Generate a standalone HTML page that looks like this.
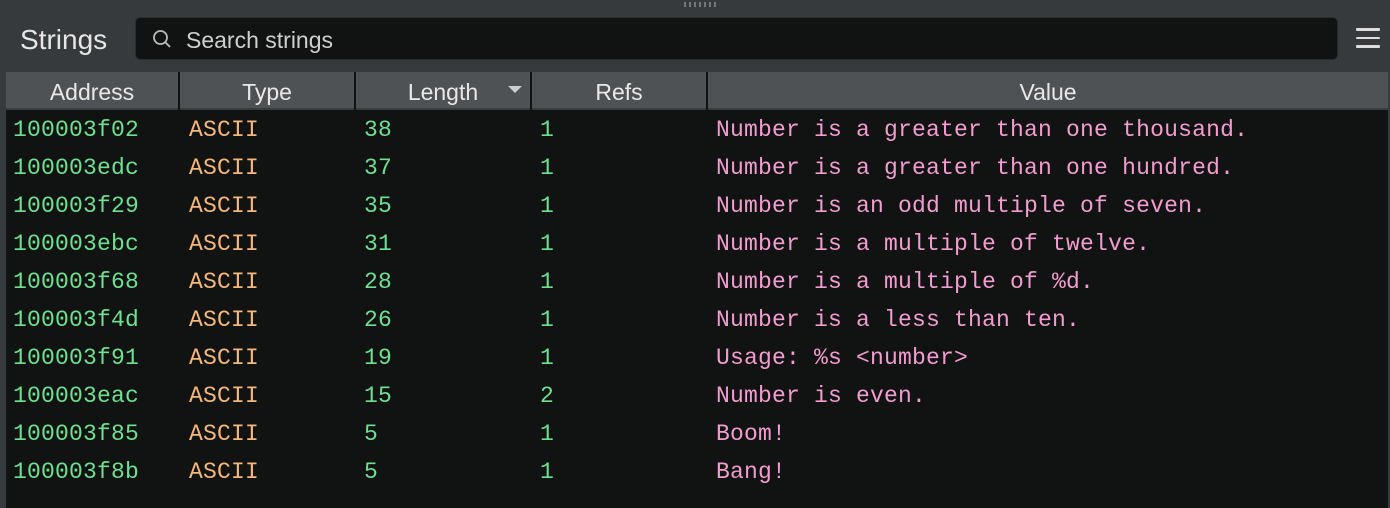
<!DOCTYPE html>
<html><head><style>
body{margin:0;width:1390px;height:508px;background:#373a3c;overflow:hidden;position:relative;font-family:"Liberation Sans",sans-serif}
.grip{position:absolute;left:684px;top:2px;width:34px;height:5px;background:repeating-linear-gradient(90deg,#777 0 2px,transparent 2px 5px)}
.title{position:absolute;left:20px;top:24px;font-size:28px;color:#e6e6e6}
.search{position:absolute;left:135px;top:17px;width:1203px;height:43px;background:#111313;border:1px solid #2a2c2d;border-radius:5px;box-sizing:border-box}
.search span{position:absolute;left:50px;top:9px;font-size:23px;color:#cfcfcf}
.menu{position:absolute;left:1356px;top:28px;width:24px}
.menu i{display:block;height:2.5px;background:#ddd;margin-bottom:6px;border-radius:1px}
.table{position:absolute;left:6px;top:72px;width:1382px;height:436px;background:#111313}
.hdr{position:absolute;top:0;height:36px;background:#4f5254;color:#e8e8e8;font-size:23px;text-align:center;line-height:40px;border-bottom:2px solid #3a3d3f}
.row{position:absolute;left:0;height:38px;font-family:"Liberation Mono",monospace;font-size:23px;line-height:40px;letter-spacing:0.2px}
.row span{position:absolute;white-space:pre}
</style></head><body>
<div class="grip"></div>
<div class="title">Strings</div>
<div class="search"><svg style="position:absolute;left:16px;top:11px" width="20" height="20" viewBox="0 0 20 20"><circle cx="8.5" cy="8.5" r="6.5" fill="none" stroke="#bbb" stroke-width="1.8"/><line x1="13.3" y1="13.3" x2="18" y2="18" stroke="#bbb" stroke-width="1.8"/></svg><span>Search strings</span></div>
<div class="menu"><i></i><i></i><i></i></div>
<div class="table">
<div class="hdr" style="left:0;width:172px">Address</div>
<div class="hdr" style="left:174px;width:174px">Type</div>
<div class="hdr" style="left:350px;width:174px">Length<svg style="position:absolute;right:8px;top:14px" width="14" height="8"><polygon points="0,0 14,0 7,7" fill="#ccc"/></svg></div>
<div class="hdr" style="left:526px;width:174px">Refs</div>
<div class="hdr" style="left:702px;width:680px">Value</div>
</div>
<div class="table" style="background:none">
<div class="row" style="top:38px"><span style="left:7px;color:#6ee08f">100003f02</span><span style="left:183px;color:#f5b77a">ASCII</span><span style="left:358px;color:#6ee08f">38</span><span style="left:534px;color:#6ee08f">1</span><span style="left:710px;color:#f29ccf">Number is a greater than one thousand.</span></div>
<div class="row" style="top:76px"><span style="left:7px;color:#6ee08f">100003edc</span><span style="left:183px;color:#f5b77a">ASCII</span><span style="left:358px;color:#6ee08f">37</span><span style="left:534px;color:#6ee08f">1</span><span style="left:710px;color:#f29ccf">Number is a greater than one hundred.</span></div>
<div class="row" style="top:114px"><span style="left:7px;color:#6ee08f">100003f29</span><span style="left:183px;color:#f5b77a">ASCII</span><span style="left:358px;color:#6ee08f">35</span><span style="left:534px;color:#6ee08f">1</span><span style="left:710px;color:#f29ccf">Number is an odd multiple of seven.</span></div>
<div class="row" style="top:152px"><span style="left:7px;color:#6ee08f">100003ebc</span><span style="left:183px;color:#f5b77a">ASCII</span><span style="left:358px;color:#6ee08f">31</span><span style="left:534px;color:#6ee08f">1</span><span style="left:710px;color:#f29ccf">Number is a multiple of twelve.</span></div>
<div class="row" style="top:190px"><span style="left:7px;color:#6ee08f">100003f68</span><span style="left:183px;color:#f5b77a">ASCII</span><span style="left:358px;color:#6ee08f">28</span><span style="left:534px;color:#6ee08f">1</span><span style="left:710px;color:#f29ccf">Number is a multiple of %d.</span></div>
<div class="row" style="top:228px"><span style="left:7px;color:#6ee08f">100003f4d</span><span style="left:183px;color:#f5b77a">ASCII</span><span style="left:358px;color:#6ee08f">26</span><span style="left:534px;color:#6ee08f">1</span><span style="left:710px;color:#f29ccf">Number is a less than ten.</span></div>
<div class="row" style="top:266px"><span style="left:7px;color:#6ee08f">100003f91</span><span style="left:183px;color:#f5b77a">ASCII</span><span style="left:358px;color:#6ee08f">19</span><span style="left:534px;color:#6ee08f">1</span><span style="left:710px;color:#f29ccf">Usage: %s &lt;number&gt;</span></div>
<div class="row" style="top:304px"><span style="left:7px;color:#6ee08f">100003eac</span><span style="left:183px;color:#f5b77a">ASCII</span><span style="left:358px;color:#6ee08f">15</span><span style="left:534px;color:#6ee08f">2</span><span style="left:710px;color:#f29ccf">Number is even.</span></div>
<div class="row" style="top:342px"><span style="left:7px;color:#6ee08f">100003f85</span><span style="left:183px;color:#f5b77a">ASCII</span><span style="left:358px;color:#6ee08f">5</span><span style="left:534px;color:#6ee08f">1</span><span style="left:710px;color:#f29ccf">Boom!</span></div>
<div class="row" style="top:380px"><span style="left:7px;color:#6ee08f">100003f8b</span><span style="left:183px;color:#f5b77a">ASCII</span><span style="left:358px;color:#6ee08f">5</span><span style="left:534px;color:#6ee08f">1</span><span style="left:710px;color:#f29ccf">Bang!</span></div>
</div>
</body></html>
